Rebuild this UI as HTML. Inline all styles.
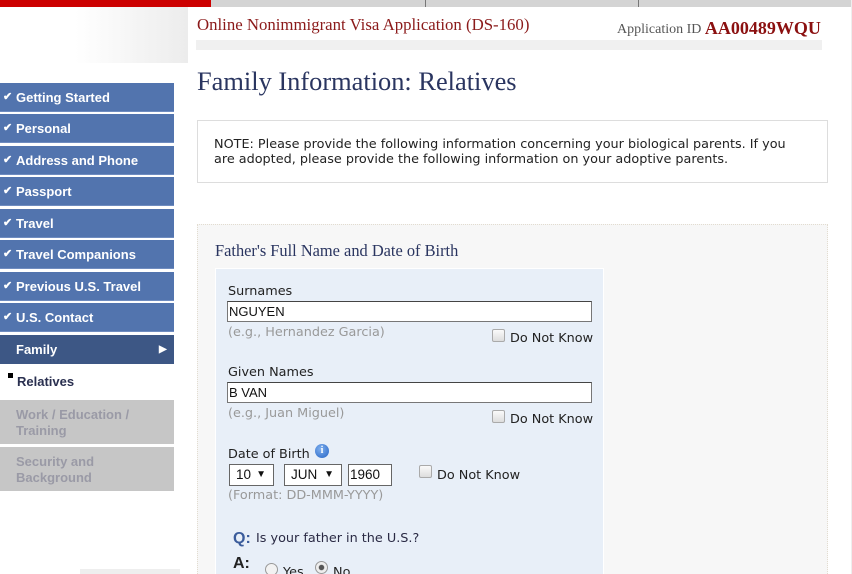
<!DOCTYPE html>
<html style="overflow:hidden;height:574px"><head><meta charset="utf-8"><style>
*{margin:0;padding:0;box-sizing:border-box}
body{width:852px;height:574px;overflow:hidden;background:#fff;position:relative;font-family:"DejaVu Sans","Liberation Sans",sans-serif}
.a{position:absolute}
.nav{position:absolute;left:0;width:174px;height:29px;background:#5274ae;color:#fff;font:bold 13px "Liberation Sans",Arial,sans-serif;line-height:29px;padding-left:16px;border-bottom:1px solid #6f8cc0}
.nav:before{content:"✔";position:absolute;left:3px;font-size:11px}
.g{position:absolute;left:0;width:174px;height:44px;background:#c6c6c6;color:#9a9aa6;font:bold 13px "Liberation Sans",Arial,sans-serif;line-height:16px;padding:7px 0 0 16px}
.lbl{position:absolute;font-size:12.8px;color:#222}
.hint{position:absolute;font-size:12.8px;color:#999}
.inp{position:absolute;left:227px;width:365px;height:21px;background:#fff;border:1px solid #777;border-top-color:#444;font:13px "Liberation Sans",Arial,sans-serif;line-height:19px;padding-left:1px;color:#111}
.cb{position:absolute;width:13px;height:13px;border:1px solid #aaa;border-radius:2px;background:linear-gradient(#fafafa,#ddd)}
.sel{position:absolute;height:22px;background:#fff;border:1px solid #666;font:13.5px "Liberation Sans",Arial,sans-serif;line-height:20px;padding-left:6px;color:#111}
.sel span{position:absolute;right:7px;font-size:10px}
</style></head><body>
<div class="a" style="left:0;top:0;width:852px;height:7px;background:#d4d4d4"></div>
<div class="a" style="left:0;top:0;width:211px;height:7px;background:#cc0000"></div>
<div class="a" style="left:425px;top:0;width:1px;height:7px;background:#777"></div>
<div class="a" style="left:638px;top:0;width:1px;height:7px;background:#777"></div>
<div class="a" style="left:0;top:7px;width:188px;height:56px;background:linear-gradient(90deg,#fff 40%,#ececec)"></div>
<div class="a" style="left:196px;top:40px;width:626px;height:10px;background:#f0f0f0"></div>
<div class="a" style="left:197px;top:15px;font:16.8px 'Liberation Serif',serif;color:#8b1a1a">Online Nonimmigrant Visa Application (DS-160)</div>
<div class="a" style="left:617px;top:17px;font:14px 'Liberation Serif',serif;color:#555">Application ID <b style="font-size:18px;color:#8b1010;position:relative;top:1px">AA00489WQU</b></div>
<div class="a" style="left:197px;top:66px;font:26.4px 'Liberation Serif',serif;color:#2a3560">Family Information: Relatives</div>
<div class="a" style="left:197px;top:120px;width:631px;height:63px;border:1px solid #ddd;font-size:12.8px;line-height:14.5px;color:#222;padding:17px 0 0 16px;white-space:nowrap">NOTE: Please provide the following information concerning your biological parents. If you<br>are adopted, please provide the following information on your adoptive parents.</div>
<div class="a" style="left:197px;top:224px;width:631px;height:350px;background:#f7f7f7;border:1px dotted #e2dcd0;border-bottom:none"></div>
<div class="a" style="left:215px;top:241px;font:16.4px 'Liberation Serif',serif;color:#2a3560">Father's Full Name and Date of Birth</div>
<div class="a" style="left:215px;top:268px;width:389px;height:306px;background:#e8eff8;border:1px solid #fff;border-bottom:none"></div>
<div class="lbl" style="left:228px;top:284px">Surnames</div>
<div class="inp" style="top:301px">NGUYEN</div>
<div class="hint" style="left:228px;top:325px">(e.g., Hernandez Garcia)</div>
<div class="cb" style="left:492px;top:329px"></div>
<div class="lbl" style="left:510px;top:331px">Do Not Know</div>
<div class="lbl" style="left:228px;top:365px">Given Names</div>
<div class="inp" style="top:382px">B VAN</div>
<div class="hint" style="left:228px;top:406px">(e.g., Juan Miguel)</div>
<div class="cb" style="left:492px;top:410px"></div>
<div class="lbl" style="left:510px;top:412px">Do Not Know</div>
<div class="lbl" style="left:228px;top:447px">Date of Birth</div>
<div class="a" style="left:315px;top:444px;width:14px;height:14px;border-radius:50%;background:radial-gradient(circle at 40% 35%,#7fb0ee,#2563c4);color:#fff;font:bold 10px 'Liberation Serif',serif;text-align:center;line-height:14px">i</div>
<div class="sel" style="left:229px;top:464px;width:45px">10<span>▼</span></div>
<div class="sel" style="left:284px;top:464px;width:58px">JUN<span>▼</span></div>
<div class="sel" style="left:348px;top:464px;width:44px;padding-left:1px">1960</div>
<div class="cb" style="left:419px;top:465px"></div>
<div class="lbl" style="left:437px;top:468px">Do Not Know</div>
<div class="hint" style="left:228px;top:488px">(Format: DD-MMM-YYYY)</div>
<div class="a" style="left:233px;top:530px;font:bold 16px 'Liberation Sans',sans-serif;color:#3b5c9b">Q:</div>
<div class="lbl" style="left:256px;top:531px;color:#2a2a44">Is your father in the U.S.?</div>
<div class="a" style="left:233px;top:555px;font:bold 16px 'Liberation Sans',sans-serif;color:#222">A:</div>
<div class="a" style="left:265px;top:563px;width:13px;height:13px;border-radius:50%;border:1px solid #999;background:#f2f2f2"></div>
<div class="lbl" style="left:283px;top:565px">Yes</div>
<div class="a" style="left:315px;top:561px;width:13px;height:13px;border-radius:50%;border:1px solid #999;background:radial-gradient(#555 30%,#eee 40%)"></div>
<div class="lbl" style="left:333px;top:565px">No</div>
<div class="a" style="left:851px;top:0;width:1px;height:574px;background:#eee"></div>
<div class="nav" style="top:83px">Getting Started</div>
<div class="nav" style="top:114px">Personal</div>
<div class="nav" style="top:146px">Address and Phone</div>
<div class="nav" style="top:177px">Passport</div>
<div class="nav" style="top:209px">Travel</div>
<div class="nav" style="top:240px">Travel Companions</div>
<div class="nav" style="top:272px">Previous U.S. Travel</div>
<div class="nav" style="top:303px">U.S. Contact</div>
<div class="a" style="left:0;top:335px;width:174px;height:29px;background:#3d5785;color:#fff;font:bold 13px 'Liberation Sans',Arial,sans-serif;line-height:29px;padding-left:16px">Family<span style="position:absolute;left:159px;font-size:10px">▶</span></div>
<div class="a" style="left:8px;top:373px;width:5px;height:5px;background:#000"></div>
<div class="a" style="left:17px;top:374px;font:bold 13px 'Liberation Sans',Arial,sans-serif;color:#2a3050">Relatives</div>
<div class="g" style="top:400px">Work / Education /<br>Training</div>
<div class="g" style="top:447px">Security and<br>Background</div>
<div class="a" style="left:80px;top:569px;width:100px;height:5px;background:#eee"></div>
</body></html>
